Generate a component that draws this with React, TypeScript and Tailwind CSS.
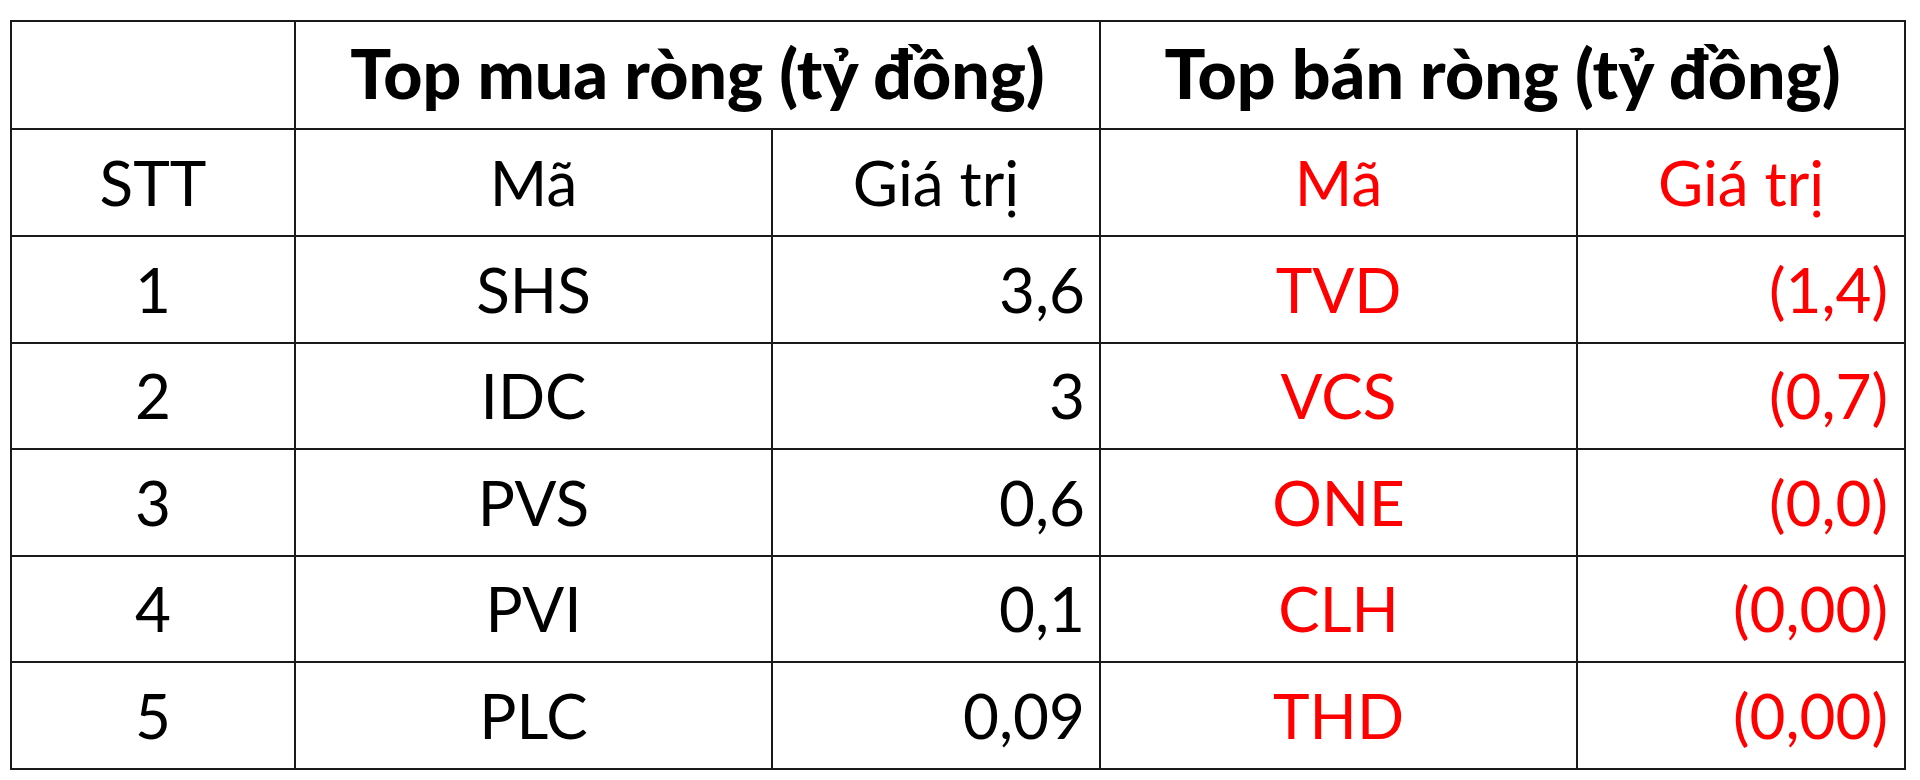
const buys = [
  { stt: 1, code: "SHS", value: "3,6" },
  { stt: 2, code: "IDC", value: "3" },
  { stt: 3, code: "PVS", value: "0,6" },
  { stt: 4, code: "PVI", value: "0,1" },
  { stt: 5, code: "PLC", value: "0,09" },
];

const sells = [
  { code: "TVD", value: "(1,4)" },
  { code: "VCS", value: "(0,7)" },
  { code: "ONE", value: "(0,0)" },
  { code: "CLH", value: "(0,00)" },
  { code: "THD", value: "(0,00)" },
];

export default function App() {
  return (
    <div className="w-[1920px] h-[780px] bg-white pt-[20px] pl-[10px] font-['Lato','Liberation_Sans',sans-serif] text-[62px] text-black">
      <table className="table-fixed border-collapse w-[1894px]">
        <colgroup>
          <col className="w-[284px]" />
          <col className="w-[477px]" />
          <col className="w-[328px]" />
          <col className="w-[477px]" />
          <col className="w-[328px]" />
        </colgroup>
        <tbody>
          <tr className="h-[107px]">
            <td className="border-2 border-[#1a1a1a]"></td>
            <td colSpan={2} className="border-2 border-[#1a1a1a] text-center font-black text-[68px] pb-[4px]">
              Top mua ròng (tỷ đồng)
            </td>
            <td colSpan={2} className="border-2 border-[#1a1a1a] text-center font-black text-[68px] pb-[4px]">
              Top bán ròng (tỷ đồng)
            </td>
          </tr>
          <tr className="h-[107px]">
            <td className="border-2 border-[#1a1a1a] text-center">STT</td>
            <td className="border-2 border-[#1a1a1a] text-center">Mã</td>
            <td className="border-2 border-[#1a1a1a] text-center">Giá trị</td>
            <td className="border-2 border-[#1a1a1a] text-center text-[#ff0000]">Mã</td>
            <td className="border-2 border-[#1a1a1a] text-center text-[#ff0000]">Giá trị</td>
          </tr>
          {buys.map((b, i) => (
            <tr key={b.stt} className="h-[106.5px]">
              <td className="border-2 border-[#1a1a1a] text-center">{b.stt}</td>
              <td className="border-2 border-[#1a1a1a] text-center">{b.code}</td>
              <td className="border-2 border-[#1a1a1a] text-right pr-[14px]">{b.value}</td>
              <td className="border-2 border-[#1a1a1a] text-center text-[#ff0000]">{sells[i].code}</td>
              <td className="border-2 border-[#1a1a1a] text-right pr-[16px] text-[#ff0000]">{sells[i].value}</td>
            </tr>
          ))}
        </tbody>
      </table>
    </div>
  );
}
